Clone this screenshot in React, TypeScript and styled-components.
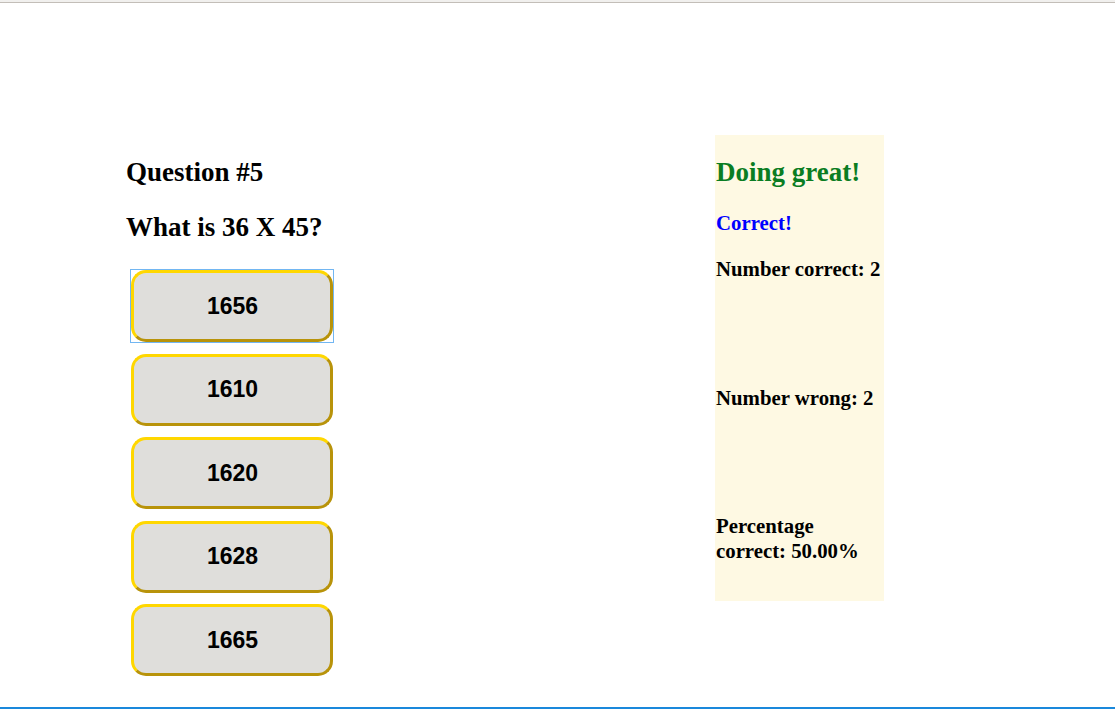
import React from "react";
import styled, { createGlobalStyle } from "styled-components";

const GlobalStyle = createGlobalStyle`
  html, body {
    margin: 0;
    padding: 0;
    background: #ffffff;
    font-family: "Liberation Serif", "Times New Roman", serif;
    color: #000;
  }
`;

const Page = styled.div`
  display: flex;
  flex-direction: column;
  height: 709px;
  overflow: hidden;
`;

const TopRule = styled.div`
  height: 2px;
  background: #f1f0ee;
  border-bottom: 1px solid #c3beb8;
  flex: none;
`;

const BottomRule = styled.div`
  height: 2px;
  background: #1a88db;
  flex: none;
`;

const Main = styled.main`
  flex: 1;
  display: flex;
  align-items: flex-start;
  padding-left: 126px;
`;

const QuizColumn = styled.section`
  width: 589px;
  margin-top: 132px;
  display: flex;
  flex-direction: column;
  align-items: flex-start;
`;

const Heading = styled.h2<{ $color?: string }>`
  margin: 22px 0 0;
  font-size: 27px;
  line-height: 30px;
  font-weight: bold;
  color: ${(p) => p.$color ?? "#000"};
`;

const Prompt = styled.h2`
  margin: 25px 0 0;
  font-size: 27px;
  line-height: 30px;
  font-weight: bold;
`;

const Answers = styled.div`
  margin: 27px 0 0 4px;
  display: flex;
  flex-direction: column;
  gap: 9.5px;
`;

const AnswerSlot = styled.div<{ $focused?: boolean }>`
  display: flex;
  border: 1px solid ${(p) => (p.$focused ? "#72b6f2" : "transparent")};
`;

const AnswerButton = styled.button`
  box-sizing: border-box;
  width: 202px;
  height: 72px;
  border-width: 3px;
  border-style: solid;
  border-color: #ffd700 #b8930a #b8930a #ffd700;
  border-radius: 15px;
  background: #dfdedb;
  font-family: "Liberation Sans", Arial, sans-serif;
  font-size: 23px;
  font-weight: bold;
  color: #000;
  cursor: pointer;
  padding: 0 0 0 1px;
  outline: none;
`;

const ScorePanel = styled.aside`
  width: 169px;
  height: 466px;
  margin-top: 132px;
  background: #fef9e3;
  box-sizing: border-box;
  display: flex;
  flex-direction: column;
`;

const Feedback = styled.p<{ $gap: number; $color?: string }>`
  margin: ${(p) => p.$gap}px 0 0 1px;
  font-size: 20.8px;
  line-height: 1.2;
  font-weight: bold;
  color: ${(p) => p.$color ?? "#000"};
`;

const answers = ["1656", "1610", "1620", "1628", "1665"];

export default function App() {
  return (
    <>
      <GlobalStyle />
      <Page>
        <TopRule />
        <Main>
          <QuizColumn>
            <Heading>Question #5</Heading>
            <Prompt>What is 36 X 45?</Prompt>
            <Answers>
              {answers.map((a, i) => (
                <AnswerSlot key={a} $focused={i === 0}>
                  <AnswerButton>{a}</AnswerButton>
                </AnswerSlot>
              ))}
            </Answers>
          </QuizColumn>
          <ScorePanel>
            <Heading $color="#0a7d22" style={{ marginLeft: 1 }}>Doing great!</Heading>
            <Feedback $gap={23.5} $color="#0000ff">Correct!</Feedback>
            <Feedback $gap={22}>Number correct: 2</Feedback>
            <Feedback $gap={104}>Number wrong: 2</Feedback>
            <Feedback $gap={103}>Percentage correct: 50.00%</Feedback>
          </ScorePanel>
        </Main>
        <BottomRule />
      </Page>
    </>
  );
}
